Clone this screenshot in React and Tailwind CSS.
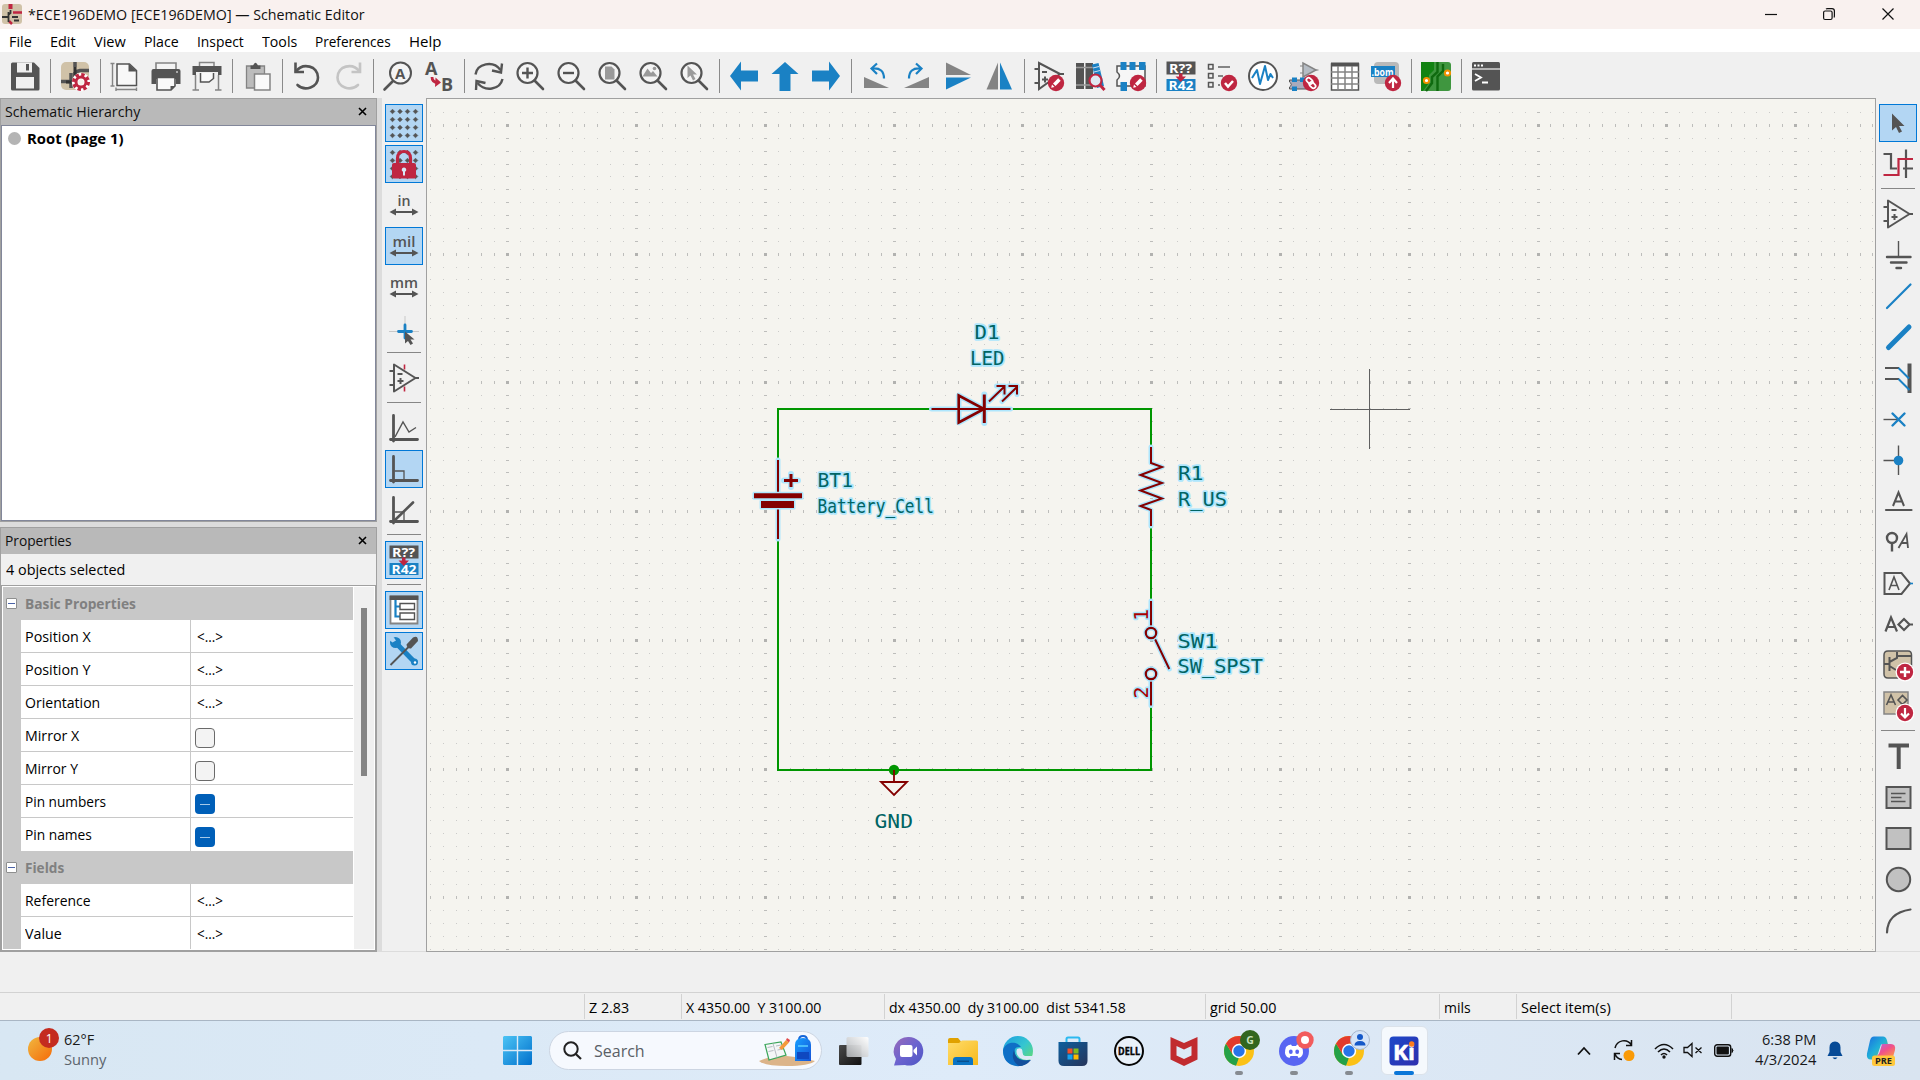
import React, { useLayoutEffect, useRef, useState } from "react";

const D = "#545454";
const B = "#1a81c4";
const R = "#bf2641";
const G = "#848484";

/* Text squeezed or stretched horizontally to an exact width. */
function Fit({ w, children, className = "" }) {
  const ref = useRef(null);
  const [k, setK] = useState(1);
  useLayoutEffect(() => {
    const n = ref.current.offsetWidth;
    if (n) setK(w / n);
  }, [w]);
  return (
    <div className={"shrink-0 whitespace-pre " + className} style={{ width: w }}>
      <span ref={ref} className="inline-block origin-left" style={{ transform: `scaleX(${k})` }}>
        {children}
      </span>
    </div>
  );
}

function Svg({ children, className = "size-[30px]", vb = "0 0 30 30" }) {
  return (
    <svg viewBox={vb} className={"block shrink-0 overflow-visible " + className} fill="none">
      {children}
    </svg>
  );
}

const Lens = ({ children }) => (
  <Svg>
    <circle cx="12.5" cy="12" r="10" stroke={D} strokeWidth="2.2" fill="#f4f4f4" />
    <path d="M19.5 19.5L28 28" stroke={D} strokeWidth="2.6" strokeLinecap="round" />
    {children}
  </Svg>
);

const Badge = ({ x = 22, y = 22, children }) => (
  <g transform={`translate(${x} ${y})`}>
    <circle r="8.2" fill={R} />
    {children}
  </g>
);

const Pencil = () => (
  <g>
    <path d="M-4.800 4.800l0.800-3.300 2.500 2.500z" fill="#fff" />
    <path d="M-3 0.500l5.200-5.200 2.500 2.500-5.200 5.200z" fill="#fff" />
  </g>
);

const Annotate = () => (
  <Svg>
    <rect x="0.5" y="0.5" width="29" height="13" fill={D} />
    <rect x="0.5" y="18" width="29" height="12" fill={B} />
    <text x="3" y="12" fontSize="13" fontWeight="700" fill="#fff" textLength="23" lengthAdjust="spacingAndGlyphs">R??</text>
    <text x="2.5" y="29" fontSize="13" fontWeight="700" fill="#fff" textLength="25" lengthAdjust="spacingAndGlyphs">R42</text>
    <path d="M13 12.5h3.500v3h3.500L14.800 21L9.500 15.500H13z" fill={R} />
  </Svg>
);

const OpAmp = ({ children, sw = 2 }) => (
  <Svg>
    {children}
    <path d="M5 1.500V28.500L26.500 15z" stroke={D} strokeWidth={sw} strokeLinejoin="round" />
    <path d="M0.500 8H5M0.500 22H5M26 15H30M8.500 11H13.500M8.500 18H14.500M11.500 15V21" stroke={D} strokeWidth={sw} />
  </Svg>
);

const GridDots = () => (
  <g fill={D}>
    {[3.5, 11, 18.5, 26.5].map((x) =>
      [3.5, 11.5, 19.5, 27.5].map((y) => (
        <path key={x + "-" + y} d={`M${x - 2.3} ${y}l2.300-2.300 2.300 2.300-2.300 2.300z`} stroke={D} strokeWidth="0.6" />
      ))
    )}
  </g>
);

const Units = ({ t, w }) => (
  <Svg>
    <text x={15 - w / 2} y="15.500" fontSize="15" fontWeight="600" fill={D} textLength={w} lengthAdjust="spacingAndGlyphs">{t}</text>
    <path d="M5 22H25" stroke={D} strokeWidth="2" />
    <path d="M0.500 22L7 18.500v7zM29.500 22L23 18.500v7z" fill={D} />
  </Svg>
);

const Axes = ({ children }) => (
  <Svg>
    <g transform="translate(0 1)">
      <path d="M4.500 1.500V27M1.500 25.500H28.500" stroke={D} strokeWidth="2.8" strokeLinecap="round" />
      {children}
    </g>
  </Svg>
);

const top = {
  save: (
    <Svg>
      <path d="M1 3q0-1.500 1.500-1.500H24l5.500 5.500V28q0 1.500-1.500 1.500H2.500Q1 29.500 1 28z" fill={D} />
      <path d="M7 1.500H22V11.500H7zM6 16H24V27.500H6z" fill="#f0f0f0" />
      <path d="M16 3h3v6.500h-3z" fill={D} />
    </Svg>
  ),
  setup: (
    <Svg>
      <rect x="1" y="1" width="28" height="28" rx="5" fill="#d0c2a8" />
      <path d="M15 1V6M15 11V19M1 20.500H11M11 12V27M15 11L20 9.500H29" stroke={D} strokeWidth="3.5" />
      <path d="M6 21h9M15 6v14" stroke="#333" strokeWidth="3" />
      <circle cx="21" cy="21" r="6" fill="#f4f0ea" stroke="#fff" strokeWidth="6.500" />
      <circle cx="21" cy="21" r="7" stroke={R} strokeWidth="4" strokeDasharray="3.200 2.300" />
      <circle cx="21" cy="21" r="5" stroke={R} strokeWidth="3" />
    </Svg>
  ),
  page: (
    <Svg>
      <path d="M7 3H19.500L26.500 9.500V24.500H7z" fill="#f8f8f8" stroke={D} strokeWidth="1.500" />
      <path d="M18.500 2.500V10.500H27z" fill={D} />
      <path d="M0.500 2.500H4.500M0.500 25H4.500M2.500 2.500V25M6 26.500v3.500M26.500 26.500v3.500M6 28.500H26.500" stroke={G} strokeWidth="1.400" />
    </Svg>
  ),
  print: (
    <Svg>
      <path d="M5 9V2H25V9" stroke={G} strokeWidth="1.600" fill="#f4f4f4" />
      <path d="M0.500 10q0-2 2-2H27.500q2 0 2 2V23H25V18H5V23H0.500z" fill={D} />
      <path d="M6 16.500H24V25l-4 4H6z" fill="#fafafa" stroke={D} strokeWidth="1.600" />
      <path d="M24 25h-4.500v4z" fill={D} />
      <path d="M25 11h2" stroke="#fff" />
    </Svg>
  ),
  plot: (
    <Svg>
      <path d="M7.500 6V1.500H22V6" stroke={G} strokeWidth="1.500" />
      <path d="M0.500 5H29.500V14H26V11H4V14H0.500z" fill={D} />
      <path d="M8.500 12V21H17l4.500-3.500V12" fill="#fafafa" stroke={D} strokeWidth="1.500" />
      <path d="M3.500 14V29M26.500 14V29M0.500 29H7M23 29H29.500" stroke={G} strokeWidth="1.500" />
    </Svg>
  ),
  paste: (
    <Svg>
      <path d="M4.500 5H22.500V27H4.500z" fill="#bcbcbc" stroke={G} strokeWidth="1.300" />
      <path d="M8.500 8V4.500H11Q13.500-1 16 4.500H18.500V8z" fill={D} />
      <path d="M12.500 13H28V29H12.500z" fill="#fafafa" stroke={G} strokeWidth="1.500" />
    </Svg>
  ),
  undo: (
    <Svg>
      <path d="M4 10.500C11 1 26 5 26 16.500C26 26 13 31 5.500 24" stroke={D} strokeWidth="2.600" strokeLinecap="round" />
      <path d="M3.500 1.500V11H12" stroke={D} strokeWidth="2.600" />
    </Svg>
  ),
  redo: (
    <Svg>
      <path d="M26.500 10.500C19.500 1 4.500 5 4.500 16.500C4.500 26 17.500 31 25 24" stroke="#c4c4c4" strokeWidth="2.600" strokeLinecap="round" />
      <path d="M27 1.500V11H18.500" stroke="#c4c4c4" strokeWidth="2.600" />
    </Svg>
  ),
  find: (
    <Svg>
      <circle cx="17.500" cy="12" r="10.500" stroke={D} strokeWidth="2" fill="#f4f4f4" />
      <path d="M9.500 20.500L1.500 28.500" stroke={D} strokeWidth="2.600" strokeLinecap="round" />
      <text x="12" y="17.500" fontSize="15" fontWeight="700" fill={D}>A</text>
    </Svg>
  ),
  replace: (
    <Svg>
      <text x="1" y="14" fontSize="18" fontWeight="700" fill={D}>A</text>
      <text x="17" y="29.500" fontSize="18" fontWeight="700" fill={D}>B</text>
      <path d="M8 16Q8 21.500 14 21.500" stroke={R} strokeWidth="2.800" />
      <path d="M11.500 16.500l5.500 5-6 4.500z" fill={R} />
    </Svg>
  ),
  refresh: (
    <Svg>
      <path d="M1.500 13.500C3 2.500 19-1 26.500 9M28.500 18C26 29 11 31 3.500 22" stroke={D} strokeWidth="2.400" />
      <path d="M28 2.500L27 11.500L18 9.500" stroke={D} strokeWidth="2.400" />
      <path d="M2 29L2.500 20L11.500 22" stroke={D} strokeWidth="2.400" />
    </Svg>
  ),
  zin: <Lens><path d="M12.500 6.500v11M7 12h11" stroke={D} strokeWidth="2.400" /></Lens>,
  zout: <Lens><path d="M7 12h11" stroke={D} strokeWidth="2.400" /></Lens>,
  zfit: <Lens><path d="M8 5.500h6.500l3 3V18.500H8z" fill="#9a9a9a" /></Lens>,
  zobj: <Lens><path d="M4.500 15.500l5-8 3.500 4.500 2-2 4.500 5.500z" fill="#9a9a9a" /><circle cx="16.500" cy="7.500" r="1.800" fill="#9a9a9a" /></Lens>,
  zsel: <Lens><path d="M8.500 4.500V17l3-2.500 2.500 5 2.500-1.500-2.500-4.500h4z" fill="#9a9a9a" /></Lens>,
  left: <Svg><path d="M1 15L12 0.500V9.500H29V20.500H12V29.500z" fill={B} /></Svg>,
  up: <Svg><path d="M15 1L28.500 13H20.500V30H9.500V13H1.500z" fill={B} /></Svg>,
  right: <Svg><path d="M29 15L18 0.500V9.500H1V20.500H18V29.500z" fill={B} /></Svg>,
  ccw: (
    <Svg>
      <path d="M3 16V27H28z" fill={G} />
      <path d="M11.500 7.500Q23 6.500 23 17.500M16 2.500L10.500 7.500L16 13" stroke={B} strokeWidth="2.200" />
    </Svg>
  ),
  cw: (
    <Svg>
      <path d="M27 16V27H2z" fill={G} />
      <path d="M18.500 7.500Q7 6.500 7 17.500M14 2.500L19.500 7.500L14 13" stroke={B} strokeWidth="2.200" />
    </Svg>
  ),
  mv: <Svg><path d="M3 1.500V14L28 14z" fill={G} /><path d="M3 16.500H28L3 28.500z" fill={B} /></Svg>,
  mh: <Svg><path d="M14 1.500V28.500H2.500z" fill={G} /><path d="M16 1.500V28.500H28z" fill={B} /></Svg>,
  symed: (
    <Svg>
      <path d="M5 2V28L26 13z" stroke={D} strokeWidth="2" />
      <path d="M0.500 8H5M0.500 22H5M8 11H13M8 18.500H14M11 15.500V21.500M24 13H30" stroke={D} strokeWidth="2" />
      <Badge><Pencil /></Badge>
    </Svg>
  ),
  browse: (
    <Svg>
      <path d="M1 2H9V28H1zM10.500 2H18V28H10.500z" fill={D} />
      <path d="M1 6.500H18M1 24H18" stroke="#999" strokeWidth="1.500" />
      <path d="M17 3.500L23.500 2L29 25L22 27z" fill={B} />
      <path d="M18 7l6-1.500M19 11l6-1.500" stroke="#cde" />
      <path d="M25 24L29.500 29" stroke={R} strokeWidth="3" />
      <circle cx="20.500" cy="19.500" r="6" fill="#dfe9f2" stroke={R} strokeWidth="2.200" />
    </Svg>
  ),
  fped: (
    <Svg>
      <path d="M1 5H29V25H1V19Q6 15 1 11z" fill="#f6f6f6" stroke={D} strokeWidth="1.500" />
      <path d="M4.500 1H10.500V9H4.500zM13.500 1H19.500V9H13.500zM23 1H29.500V9H23zM4.500 21H11V30H4.500z" fill={B} />
      <Badge><Pencil /></Badge>
    </Svg>
  ),
  ann: <Annotate />,
  erc: (
    <Svg>
      <path d="M1.500 3.500h4.500v4.500h-4.500zM1.500 12.500h4.500v4.500h-4.500zM1.500 21.500h4.500v4.500h-4.500z" stroke={D} strokeWidth="1.500" />
      <path d="M11 6H23M11 15H16M11 24H13" stroke={G} strokeWidth="2" />
      <Badge><path d="M-4 0l3 3.500 5-5.500" stroke="#fff" strokeWidth="2.500" /></Badge>
    </Svg>
  ),
  sim: (
    <Svg>
      <circle cx="15" cy="15" r="14" fill="#fff" stroke={D} strokeWidth="2" />
      <path d="M4 17L9 9L12 23L17 5L20 19L22.500 13L25 17" stroke={B} strokeWidth="2" strokeLinejoin="round" />
    </Svg>
  ),
  assign: (
    <Svg>
      <path d="M14 2V16L27 9z" fill="#b5bcc4" stroke={G} strokeWidth="1.500" />
      <path d="M11 5H14M11 12H14M27 9H29.500" stroke={G} />
      <path d="M0.500 19H20V28H0.500V26Q4 23.500 0.500 21z" fill="#aab" stroke={D} />
      <path d="M3 16.500H8V21H3zM11 16.500H16V21H11zM3 25.500H8V30H3z" fill={B} />
      <Badge>
        <rect x="-5.500" y="-2.200" width="7" height="4.400" rx="2.200" transform="rotate(45) translate(-0.600 -0.500)" stroke="#fff" strokeWidth="1.700" />
        <rect x="-1.500" y="-2.200" width="7" height="4.400" rx="2.200" transform="rotate(45) translate(0.600 0.500)" stroke="#fff" strokeWidth="1.700" />
      </Badge>
    </Svg>
  ),
  table: (
    <Svg>
      <path d="M1.500 3H28.500V29H1.500z" fill="#fff" stroke={D} strokeWidth="1.500" />
      <path d="M1 1.500H29V5.500H1z" fill={D} />
      <path d="M1 11H29M1 17H29M1 23H29M8 5V29M15 5V29M22 5V29" stroke={G} strokeWidth="1.500" />
    </Svg>
  ),
  bom: (
    <Svg>
      <rect x="3" y="1" width="25" height="22" rx="4" fill="#b9b9b9" />
      <rect x="0" y="5" width="24" height="11" fill={B} />
      <text x="0.500" y="14.500" fontSize="11" fontWeight="700" fill="#fff" textLength="22" lengthAdjust="spacingAndGlyphs">.bom</text>
      <Badge><path d="M0 5V-4M-4 0L0-4.500L4 0" stroke="#fff" strokeWidth="2.200" /></Badge>
    </Svg>
  ),
  pcb: (
    <Svg>
      <rect x="0" y="1" width="30" height="29" rx="3" fill="#3f963f" />
      <path d="M0 1H13V9L8 14V22L2 30H0zM0 3z" fill="#128312" />
      <path d="M16.500 1V11L11 16V22L5 30M22 3V10L16.500 15.500V30" stroke="#0f6a0f" strokeWidth="2.400" />
      <circle cx="26.500" cy="12" r="2.600" fill="#fff" stroke="#f29100" strokeWidth="2" />
      <circle cx="5.500" cy="19.500" r="2.600" fill="#fff" stroke="#f29100" strokeWidth="2" />
    </Svg>
  ),
  term: (
    <Svg>
      <rect x="1" y="1" width="28" height="28.500" rx="1.500" fill={D} />
      <path d="M1 8H29" stroke="#e8e8e8" strokeWidth="1.300" />
      <path d="M3 4.500h2M6.500 4.500h2M10 4.500h2" stroke="#fff" strokeWidth="2" />
      <path d="M4 13L10 16.500L4 20M11 21.500H17" stroke="#fff" strokeWidth="1.800" />
    </Svg>
  ),
};

const topOrder = [
  "save", "|", "setup", "|", "page", "print", "plot", "|", "paste", "|", "undo", "redo", "|", "find", "replace", "|",
  "refresh", "zin", "zout", "zfit", "zobj", "zsel", "|", "left", "up", "right", "|", "ccw", "cw", "mv", "mh", "|",
  "symed", "browse", "fped", "|", "ann", "erc", "sim", "assign", "table", "bom", "|", "pcb", "|", "term",
];

const leftTools = [
  { on: 1, i: <Svg><GridDots /></Svg> },
  {
    on: 1,
    i: (
      <Svg>
        <GridDots />
        <path d="M8.500 15V9.500Q8.500 2.500 15 2.500T21.500 9.500V15" stroke={R} strokeWidth="3.200" />
        <rect x="3" y="14" width="24" height="15.500" rx="2" fill={R} />
        <path d="M15 18.500a2.200 2.200 0 0 1 1 4.200V26.500h-2v-3.800a2.200 2.200 0 0 1 1-4.200z" fill="#d8e8f8" />
      </Svg>
    ),
  },
  { i: <Units t="in" w={13} /> },
  { on: 1, i: <Units t="mil" w={23} /> },
  { i: <Units t="mm" w={28} /> },
  {
    i: (
      <Svg>
        <g transform="translate(0 2)">
          <path d="M16 1V17M0 16.500H30" stroke="#c8c8c8" />
          <path d="M16 10V23M9.500 16.500H22.500" stroke={B} strokeWidth="2.800" strokeLinecap="round" />
          <path d="M16 16.500V28.500l3-2.500 2.500 4 2.500-1.500-2.500-4h4z" fill={D} />
        </g>
      </Svg>
    ),
  },
  "|",
  { i: <OpAmp><path d="M15.500 1.500V6.500M15.500 23.500V28.500" stroke={R} strokeWidth="1.600" /></OpAmp> },
  "|",
  { i: <Axes><path d="M6 23L14 8L20 18L27 13.500" stroke={D} strokeWidth="1.400" /></Axes> },
  { on: 1, i: <Axes><path d="M5.500 16H15V25" stroke={D} strokeWidth="1.300" /></Axes> },
  { i: <Axes><path d="M5.500 16H15V25" stroke={D} strokeWidth="1.300" /><path d="M5 25L24 6.500" stroke={D} strokeWidth="2.600" strokeLinecap="round" /></Axes> },
  "|",
  { on: 1, i: <Annotate /> },
  "|",
  {
    on: 1,
    i: (
      <Svg>
        <path d="M1.500 1.500H28.500V28.500H1.500z" fill="#fff" stroke={G} strokeWidth="1.800" />
        <path d="M0.600 0.600H29.400V5H0.600z" fill={D} />
        <path d="M6.500 5V21.500H11M6.500 11.500H11" stroke={B} strokeWidth="2.200" />
        <path d="M11 8.500H25.500V14.500H11zM11 18H25.500V24.500H11z" stroke={D} strokeWidth="1.400" />
      </Svg>
    ),
  },
  {
    on: 1,
    i: (
      <Svg>
        <path d="M6.500 6.500L24.500 25" stroke={B} strokeWidth="5" />
        <circle cx="6.500" cy="6.500" r="5.500" fill={B} />
        <path d="M-1-1H3L7 4.500 3.500 6.500-1 3z" fill="#b3d6f3" />
        <circle cx="25.500" cy="26" r="3.500" fill={B} />
        <circle cx="26" cy="26.500" r="1.200" fill="#fff" />
        <path d="M1.500 29L20 10.500" stroke={D} strokeWidth="1.800" />
        <path d="M17.500 8.500L24 1.500Q29-1 29 5L22 12.500Q18 13 17.500 8.500z" fill={D} />
      </Svg>
    ),
  },
];

const SheetBase = () => (
  <path d="M1 5Q1 1 5 1H25Q28.500 1 28.500 5V24Q28.500 28 25 28H5Q1 28 1 24z" fill="#d0c2a8" stroke={D} strokeWidth="1.500" />
);

const rightTools = [
  { on: 1, i: <Svg><path d="M9 5.500V22.500l4-3.500 3 6 3-1.500-3-5.500h5.500z" fill={D} /></Svg> },
  {
    i: (
      <Svg>
        <path d="M0.500 5H8V19.500H14M20 19.500H30M23 0.500V29" stroke={D} strokeWidth="2.200" />
        <path d="M0.500 26H15.500V10H30" stroke={R} strokeWidth="2.200" />
      </Svg>
    ),
  },
  "|",
  { i: <OpAmp /> },
  { i: <Svg><path d="M15.500 1V16" stroke={D} strokeWidth="1.400" /><path d="M4 17H27.500M8 22.500H23.500M13.500 28H18" stroke={D} strokeWidth="2.400" strokeLinecap="round" /></Svg> },
  { i: <Svg><path d="M4 27L27.500 3.500" stroke={B} strokeWidth="2.200" strokeLinecap="round" /></Svg> },
  { i: <Svg><path d="M5.500 25.500L26 5" stroke={B} strokeWidth="5" strokeLinecap="round" /></Svg> },
  {
    i: (
      <Svg>
        <path d="M26.500 0.500V30" stroke={D} strokeWidth="4" />
        <path d="M2 5H16M2 16H16" stroke={D} strokeWidth="2.200" />
        <path d="M15.500 5L26 15.500M15.500 16L26.500 27" stroke={B} strokeWidth="2" />
      </Svg>
    ),
  },
  { i: <Svg><path d="M0.500 15.500H15" stroke={D} strokeWidth="1.400" /><path d="M9.500 9.500L21.500 21.500M21.500 9.500L9.500 21.500" stroke={B} strokeWidth="2.400" strokeLinecap="round" /></Svg> },
  { i: <Svg><path d="M0.500 15.500H15M15.500 0.500V30" stroke={D} strokeWidth="1.400" /><circle cx="15.500" cy="15.500" r="4.800" fill={B} /></Svg> },
  { i: <Svg><path d="M10 20L15.500 6.500L21 20M12 15.500H19" stroke={D} strokeWidth="2" /><path d="M3 24H28.500" stroke={D} strokeWidth="2.200" strokeLinecap="round" /></Svg> },
  {
    i: (
      <Svg>
        <circle cx="9" cy="11" r="5" stroke={D} strokeWidth="2.400" />
        <path d="M9 16V24.500" stroke={D} strokeWidth="2.400" />
        <path d="M15.500 21L23.500 7L25 21M18.500 16H24.500" stroke={D} strokeWidth="1.800" />
      </Svg>
    ),
  },
  {
    i: (
      <Svg>
        <path d="M1.500 5H18.500L27 15.500L18.500 26H1.500z" stroke={D} strokeWidth="2" />
        <path d="M6 22L11 9L16 22M8 17.500H14" stroke={D} strokeWidth="1.600" />
        <path d="M27 15.500H30" stroke={B} strokeWidth="1.600" />
      </Svg>
    ),
  },
  {
    i: (
      <Svg>
        <path d="M2.500 22.500L8 8.500L14 22.500M4.500 18H12" stroke={D} strokeWidth="2.200" />
        <path d="M15.500 15.500L21 10L26.500 15.500L21 21zM26.500 15.500H30" stroke={D} strokeWidth="2.200" />
      </Svg>
    ),
  },
  {
    i: (
      <Svg>
        <SheetBase />
        <path d="M1 14H6M6.500 7V21M6.500 12L14 8V2M14 6H28M6.500 16L13 20" stroke={D} strokeWidth="2" />
        <circle cx="22" cy="22" r="9.500" fill="#fff" />
        <Badge><path d="M-5 0H5M0-5V5" stroke="#fff" strokeWidth="2.400" /></Badge>
      </Svg>
    ),
  },
  {
    i: (
      <Svg>
        <path d="M1 1H25V23H1z" fill="#d0c2a8" stroke={G} strokeWidth="1.500" />
        <path d="M3.500 14L8 4L12.500 14M5 11H11M15 9L19.500 4.500L24 9L19.500 13.500z" stroke={D} strokeWidth="1.600" />
        <circle cx="22" cy="22" r="9.500" fill="#fff" />
        <Badge><path d="M0-5V4M-4 0.500L0 4.500L4 0.500" stroke="#fff" strokeWidth="2.200" /></Badge>
      </Svg>
    ),
  },
  "|",
  { i: <Svg><path d="M5.500 4.500H26M15.700 4.500V28" stroke={D} strokeWidth="4" /></Svg> },
  { i: <Svg><path d="M3.500 5H27.500V26H3.500z" fill="#c1c1c1" stroke={D} strokeWidth="2" /><path d="M8 11.500H22.500M8 15.500H18.500M8 19.500H22.500" stroke={D} strokeWidth="1.500" /></Svg> },
  { i: <Svg><path d="M3.500 5H27.500V26H3.500z" fill="#c1c1c1" stroke={D} strokeWidth="2" /></Svg> },
  { i: <Svg><circle cx="15.500" cy="15.500" r="11.700" fill="#c1c1c1" stroke={D} strokeWidth="2" /></Svg> },
  { i: <Svg><path d="M4 27.500Q4.500 8 27.500 4.500" stroke={D} strokeWidth="2.200" strokeLinecap="round" /></Svg> },
];

function ToolColumn({ items, className }) {
  return (
    <div className={"flex flex-col items-center bg-[#f0f0f0] pt-[4px] " + className}>
      {items.map((t, n) =>
        t === "|" ? (
          <div key={n} className="flex h-[9px] w-[34px] shrink-0 items-start pt-[4px]">
            <div className="h-px w-full bg-[#868686]" />
          </div>
        ) : (
          <div key={n} className="flex h-[41px] shrink-0 items-center">
            <div className={"flex size-[38px] items-center justify-center border " + (t.on ? "border-[#0078d7] bg-[#b3d6f3]" : "border-transparent")}>
              {t.i}
            </div>
          </div>
        )
      )}
    </div>
  );
}

/* ---------- schematic canvas ---------- */
const STEP_X = 12.88;
const STEP_Y = 12.87;
let minor = "";
let dashV = "";
let dashH = "";
let major = "";
for (let i = -6; i < 107; i++) {
  for (let j = -2; j < 65; j++) {
    const x = Math.round(507.1 + i * STEP_X);
    const y = Math.round(125 + j * STEP_Y);
    if (x < 428 || x > 1873 || y < 100 || y > 949) continue;
    const mi = i % 10 === 0;
    const mj = j % 10 === 0;
    if (mi && mj) major += `M${x - 1} ${y - 1}h3v3h-3z`;
    else if (mj) dashV += `M${x} ${y - 1}h1v3h-1z`;
    else if (mi) dashH += `M${x - 1} ${y}h3v1h-3z`;
    else minor += `M${x} ${y}h1v1h-1z`;
  }
}

const HALO = "#aee6fd";
const MAROON = "#840000";

function Label({ x, y, w, children, halo = true, fill = "#006464" }) {
  return (
    <text
      x={x}
      y={y}
      textLength={w}
      lengthAdjust="spacingAndGlyphs"
      fontSize="20"
      fill={fill}
      stroke={halo ? HALO : "none"}
      strokeWidth={halo ? 3.4 : 0}
      strokeLinejoin="round"
      paintOrder="stroke"
      fontFamily="'DejaVu Sans Mono', monospace"
    >
      {children}
    </text>
  );
}

/* Strokes that share one selection glow; each entry is [path, width]. */
function Glow({ lines }) {
  return (
    <>
      {lines.map(([d, sw]) => (
        <path key={d} d={d} stroke={HALO} strokeWidth={sw + 3} strokeLinecap="round" strokeLinejoin="round" />
      ))}
      {lines.map(([d, sw]) => (
        <path key={d + "c"} d={d} stroke={MAROON} strokeWidth={sw} />
      ))}
    </>
  );
}

function Canvas() {
  return (
    <div className="h-[854px] w-[1450px] shrink-0 overflow-hidden border border-[#a0a0a0] bg-[#f5f4ef]">
      <svg viewBox="427 99 1448 852" className="block h-[852px] w-[1448px]" fill="none">
        <g shapeRendering="crispEdges">
          <path d={minor} fill="#cbcbc9" />
          <path d={dashV + dashH} fill="#bdbdbb" />
          <path d={major} fill="#b2b2b0" />
        </g>
        <path d="M931 409H778V460M778 539V770H1151V705M1151 601V526M1151 447V409H1010" stroke="#009600" strokeWidth="2" />
        <circle cx="894" cy="770" r="5.200" fill="#009600" />

        <Glow
          lines={[
            ["M931.500 409H1010.500", 2],
            ["M958.700 395.500V422.500L984 409z", 2.6],
            ["M984.300 394.500V423", 3],
            ["M989 401.500L1004.500 386.500M996.500 386H1004.500V394.500", 2],
            ["M1002 401.500L1017.500 386.500M1008.500 386H1017V394.500", 2],
          ]}
        />

        <Glow lines={[["M778 460V493M778 508V539", 2], ["M784 480.500H798M791 474V487", 3]]} />
        <path d="M754 493.300H802V498.200H754zM761 501H794V508H761z" fill={MAROON} stroke={HALO} strokeWidth="3" paintOrder="stroke" strokeLinejoin="round" />

        <Glow lines={[["M1151 447V463L1162 467L1140.500 475L1162 483L1140.500 490.500L1162 498.500L1140.500 506L1151 510V526", 2]]} />

        <Glow lines={[["M1151 601V628M1151 679V705.500M1154.500 638L1169.300 669", 2]]} />
        <circle cx="1151" cy="633" r="5.200" stroke={HALO} strokeWidth="5" />
        <circle cx="1151" cy="674" r="5.200" stroke={HALO} strokeWidth="5" />
        <circle cx="1151" cy="633" r="5.200" stroke={MAROON} strokeWidth="2.200" />
        <circle cx="1151" cy="674" r="5.200" stroke={MAROON} strokeWidth="2.200" />
        <g transform="translate(1147.500 621) rotate(-90)"><Label x="0" y="0" w={12} fill="#a90000">1</Label></g>
        <g transform="translate(1147.500 698.500) rotate(-90)"><Label x="0" y="0" w={12} fill="#a90000">2</Label></g>

        <path d="M894 770V782M881 782H907L894 795z" stroke={MAROON} strokeWidth="1.800" />

        <Label x={974.500} y={338.500} w={25}>D1</Label>
        <Label x={970} y={364.500} w={34.500}>LED</Label>
        <Label x={817.500} y={487} w={35.500}>BT1</Label>
        <Label x={817.500} y={513} w={116.500}>Battery_Cell</Label>
        <Label x={1178} y={480} w={25.500}>R1</Label>
        <Label x={1178} y={505.700} w={49}>R_US</Label>
        <Label x={1177.500} y={647.500} w={40}>SW1</Label>
        <Label x={1177.500} y={673} w={85.500}>SW_SPST</Label>
        <Label x={874.500} y={827.500} w={38.500} halo={false}>GND</Label>

        <path d="M1330 409.500H1410M1369.500 369V449" stroke="#606060" shapeRendering="crispEdges" />
      </svg>
    </div>
  );
}

/* ---------- left dock ---------- */
const CloseX = () => (
  <Svg className="size-[9px]" vb="0 0 9 9"><path d="M1 1L8 8M8 1L1 8" stroke="#000" strokeWidth="1.600" /></Svg>
);

function Group({ title, w, children }) {
  return (
    <div className="w-[350px] bg-[#c8c8c8]">
      <div className="flex h-[33px] items-center pl-[3px]">
        <div className="flex size-[11px] items-center justify-center rounded-[1px] border border-[#8e8f8f] bg-white">
          <div className="h-px w-[7px] bg-[#4b63a7]" />
        </div>
        <Fit w={w} className="ml-[8px] text-[15px] font-bold leading-[33px] text-[#808080]">{title}</Fit>
      </div>
      <div className="ml-[18px] flex flex-col">{children}</div>
    </div>
  );
}

function Row({ name, w, kind, last }) {
  return (
    <div className={"flex h-[33px] border-[#c8c8c8] bg-white " + (last ? "" : "border-b")}>
      <div className="w-[170px] border-r border-[#c8c8c8] pl-[4px]">
        <Fit w={w} className="text-[15px] leading-[33px]">{name}</Fit>
      </div>
      {kind === "dots" && <Fit w={26} className="ml-[6px] text-[14px] leading-[34px]">{"<...>"}</Fit>}
      {kind === "off" && <div className="ml-[4px] mt-[9px] size-[20px] rounded-[4px] border border-[#6a6a6a] bg-[#f3f3f3]" />}
      {kind === "mixed" && (
        <div className="ml-[4px] mt-[9px] flex size-[20px] items-center justify-center rounded-[4px] bg-[#005fb8]">
          <div className="h-px w-[10px] bg-[#a5c8e8]" />
        </div>
      )}
    </div>
  );
}

function LeftDock() {
  return (
    <div className="flex h-[854px] w-[377px] shrink-0 flex-col justify-between bg-[#dcdcdc]">
      <div className="flex h-[424px] flex-col border border-[#a0a0a0] bg-white">
        <div className="flex h-[26px] shrink-0 items-center justify-between bg-[#b9b9b9] pb-[2px] pl-[4px] pr-[9px]">
          <Fit w={135} className="text-[15px] text-[#101010]">Schematic Hierarchy</Fit>
          <CloseX />
        </div>
        <div className="flex-1 border border-[#82879a] pl-[6px] pt-[2px]">
          <div className="flex h-[20px] items-center">
            <div className="size-[13px] rounded-full bg-[#b4b4b4]" />
            <Fit w={96} className="ml-[6px] text-[15px] font-bold leading-[20px]">Root (page 1)</Fit>
          </div>
        </div>
      </div>
      <div className="flex h-[425px] flex-col border border-[#a0a0a0] bg-[#f0f0f0]">
        <div className="flex h-[26px] shrink-0 items-center justify-between bg-[#b9b9b9] pb-[2px] pl-[4px] pr-[9px]">
          <Fit w={67} className="text-[15px] text-[#101010]">Properties</Fit>
          <CloseX />
        </div>
        <Fit w={119} className="ml-[5px] h-[31px] text-[15px] leading-[30px]">4 objects selected</Fit>
        <div className="flex min-h-0 flex-1 overflow-hidden border border-[#a0a0a0] bg-white pl-px pt-px pb-px">
          <div className="w-[350px] overflow-hidden">
            <Group title="Basic Properties" w={111}>
              <Row name="Position X" w={66} kind="dots" />
              <Row name="Position Y" w={66} kind="dots" />
              <Row name="Orientation" w={75} kind="dots" />
              <Row name="Mirror X" w={54} kind="off" />
              <Row name="Mirror Y" w={53} kind="off" />
              <Row name="Pin numbers" w={81} kind="mixed" />
              <Row name="Pin names" w={67} kind="mixed" last />
            </Group>
            <Group title="Fields" w={39}>
              <Row name="Reference" w={66} kind="dots" />
              <Row name="Value" w={37} kind="dots" last />
            </Group>
          </div>
          <div className="ml-px mr-px flex-1 bg-[#f0f0f0]">
            <div className="ml-[7px] mt-[21px] h-[168px] w-[6px] bg-[#858585]" />
          </div>
        </div>
      </div>
    </div>
  );
}

/* ---------- status bar ---------- */
const status = [
  ["w-[97px]", 40, "Z 2.83"],
  ["w-[203px]", 135, "X 4350.00  Y 3100.00"],
  ["w-[321px]", 237, "dx 4350.00  dy 3100.00  dist 5341.58"],
  ["w-[234px]", 66, "grid 50.00"],
  ["w-[77px]", 27, "mils"],
  ["w-[215px]", 90, "Select item(s)"],
];

/* ---------- taskbar ---------- */
const Chrome = () => (
  <>
    <circle cx="15" cy="15" r="15" fill="#fbc116" />
    <path d="M2 7.500L9 19L15 21.500L12 29.700A15 15 0 0 1 2 7.500z" fill="#24a148" />
    <path d="M15 7.500H28Q24 0 15 0Q6 0 2 7.500L8.500 18Z" fill="#e33b2e" />
    <circle cx="15" cy="15" r="7.200" fill="#fff" />
    <circle cx="15" cy="15" r="5.700" fill="#2874e8" />
  </>
);

const apps = [
  {
    i: (
      <Svg>
        <rect x="1" y="9" width="22.500" height="20" rx="1" fill="url(#gDark)" />
        <rect x="8.500" y="1" width="22" height="20" rx="1.500" fill="url(#gGlass)" />
      </Svg>
    ),
  },
  {
    i: (
      <Svg>
        <path d="M15 1A14.300 14.300 0 1 1 12 29L1 29.500L3 23A14.300 14.300 0 0 1 15 1z" fill="url(#gChat)" />
        <rect x="7" y="9" width="12.500" height="12" rx="2" fill="#fff" />
        <path d="M20.500 14l3.500-3.500v9L20.500 16z" fill="#fff" />
      </Svg>
    ),
  },
  {
    i: (
      <Svg>
        <path d="M0 4Q0 2 2 2H10L13 5.500V12H0z" fill="#e0a100" />
        <path d="M0 7H11L14 4.500H28.500Q30 4.500 30 6V29H0z" fill="url(#gFold)" />
        <path d="M5 29V24Q5 21 8 21H22Q25 21 25 24V29z" fill="#0a74c4" />
        <path d="M9 25.300H21" stroke="#07508e" strokeWidth="1.500" />
      </Svg>
    ),
  },
  {
    i: (
      <Svg>
        <circle cx="15" cy="15" r="15" fill="url(#gEdge)" />
        <path d="M0 14C2 6 13 4 18 11Q10 10 12 18Q15 26 27 24Q21 31 13 30Q0 28 0 14z" fill="#0f6fc6" />
        <path d="M11 14Q7 24 16 30Q23 30 28 24Q15 26 12 18z" fill="#134f9c" />
        <path d="M19.500 15Q19 19 22 20H30V22Q24 26 17 22Q12 18 14 13Q19 11 19.500 15z" fill="#dde9f7" />
      </Svg>
    ),
  },
  {
    i: (
      <Svg>
        <path d="M8.500 7V3Q8.500 1.500 10 1.500H20Q21.500 1.500 21.500 3V7" stroke="#2cb9f0" strokeWidth="2" />
        <path d="M0.500 6H29.500V25Q29.500 30 24 30H6Q0.500 30 0.500 25z" fill="url(#gStore)" />
        <path d="M9.500 12.500h5v5h-5z" fill="#f2502a" />
        <path d="M15.500 12.500h5v5h-5z" fill="#7fba20" />
        <path d="M9.500 18.500h5v5h-5z" fill="#15a2f0" />
        <path d="M15.500 18.500h5v5h-5z" fill="#ffb900" />
      </Svg>
    ),
  },
  {
    i: (
      <Svg>
        <circle cx="15" cy="15" r="14" stroke="#050505" strokeWidth="2" fill="#e9f1fa" />
        <text x="4" y="18.800" fontSize="10.500" fontWeight="700" fill="#050505" stroke="#050505" strokeWidth="0.400" textLength="22" lengthAdjust="spacingAndGlyphs">DELL</text>
      </Svg>
    ),
  },
  { i: <Svg><path d="M1.500 1L15 7L28.500 1V23.500L15 30L1.500 23.500zM7.500 10V19.500L15 23L22.500 19.500V10L15 13.500z" fill="#c12b2f" fillRule="evenodd" /></Svg> },
  {
    dot: 1,
    i: (
      <Svg>
        <Chrome />
        <circle cx="26" cy="4" r="10" fill="#32661f" />
        <text x="22.300" y="7.800" fontSize="10.500" fontWeight="700" fill="#c8e0bc">G</text>
      </Svg>
    ),
  },
  {
    dot: 1,
    i: (
      <Svg>
        <circle cx="15" cy="15" r="15" fill="#5865f2" />
        <path d="M8 21Q4.500 18 7 11Q9 8.500 12 8.500L13 10H17L18 8.500Q21 8.500 23 11Q25.500 18 22 21L19.500 22L18.500 20H11.500L10.500 22z" fill="#fff" />
        <ellipse cx="11.800" cy="15.800" rx="1.900" ry="2.200" fill="#5865f2" />
        <ellipse cx="18.200" cy="15.800" rx="1.900" ry="2.200" fill="#5865f2" />
        <circle cx="26" cy="4" r="8.700" fill="#f25c5c" />
        <circle cx="26" cy="4" r="4" fill="#fff" />
      </Svg>
    ),
  },
  {
    dot: 1,
    i: (
      <Svg>
        <Chrome />
        <circle cx="26" cy="4" r="9.500" fill="#d5e4f8" stroke="#a7b6cc" />
        <circle cx="26" cy="1" r="3" fill="#1558c8" />
        <path d="M20.500 9.500Q20.500 5 26 5T31.500 9.500z" fill="#1558c8" />
      </Svg>
    ),
  },
  {
    active: 1,
    i: (
      <Svg>
        <rect x="0.500" y="0.500" width="29" height="29" rx="4" fill="url(#gKi)" />
        <text x="4" y="23.500" fontSize="22" fontWeight="700" fill="#fff" stroke="#fff" strokeWidth="0.600" textLength="22" lengthAdjust="spacingAndGlyphs">Ki</text>
        <circle cx="22.700" cy="8" r="2.700" fill="#ff7b1c" />
      </Svg>
    ),
  },
];

const Grad = ({ id, a, b, m }) => (
  <linearGradient id={id} x1="0" y1="0" x2="1" y2="1">
    <stop offset="0" stopColor={a} />
    {m && <stop offset="0.500" stopColor={m} />}
    <stop offset="1" stopColor={b} />
  </linearGradient>
);

function Taskbar() {
  return (
    <div className="flex h-[60px] shrink-0 items-center border-t border-[#a9b6c4] bg-linear-to-r from-[#d8e7f3] via-[#deebf9] to-[#d9e4f0]">
      <svg className="absolute size-0">
        <defs>
          <Grad id="gDark" a="#4a4a4a" b="#111" />
          <linearGradient id="gGlass" x1="1" y1="0" x2="0" y2="1">
            <stop offset="0" stopColor="#fff" />
            <stop offset="1" stopColor="#b0b3b6" stopOpacity="0.900" />
          </linearGradient>
          <Grad id="gChat" a="#9a6ab8" m="#6b63cf" b="#4d55c4" />
          <Grad id="gFold" a="#ffdc6b" b="#f7b91a" />
          <Grad id="gEdge" a="#1b9de2" m="#35c6d0" b="#6fe05a" />
          <Grad id="gStore" a="#0d5f9e" b="#27345a" />
          <Grad id="gKi" a="#1d48c8" b="#2e2fae" />
          <Grad id="gWin" a="#4cc4f5" b="#0070cc" />
          <Grad id="gSun" a="#f0b840" b="#f56a08" />
          <Grad id="gBag" a="#17a0ff" b="#1553d8" />
          <Grad id="gCoA" a="#1a6de0" m="#20b0d8" b="#8bc34a" />
          <Grad id="gCoB" a="#a56be8" m="#f0508c" b="#ff9d3c" />
        </defs>
      </svg>
      <Svg className="mb-[11px] ml-[28px] h-[34px] w-[32px]" vb="0 0 32 34">
        <circle cx="12" cy="21" r="12" fill="url(#gSun)" />
        <circle cx="21" cy="10" r="10" fill="#c42b1f" />
        <text x="17.800" y="14.500" fontSize="12" fill="#fff">1</text>
      </Svg>
      <div className="mb-[2px] ml-[4px] w-[439px]">
        <Fit w={30} className="text-[14px] leading-[20px] text-[#1a1a1a]">62°F</Fit>
        <Fit w={42} className="text-[14px] leading-[20px] text-[#5c646c]">Sunny</Fit>
      </div>
      <Svg className="size-[29px]" vb="0 0 29 29">
        <path d="M1 0H13.800V13.800H0V1zM15.200 0H28L29 1V13.800H15.200zM0 15.200H13.800V29H1L0 28zM15.200 15.200H29V28L28 29H15.200z" fill="url(#gWin)" />
      </Svg>
      <div className="ml-[17px] flex h-[39px] w-[273px] items-center rounded-full border border-[#ccd5e2] bg-[#f6f9fe] pl-[13px]">
        <Svg className="size-[19px]" vb="0 0 19 19">
          <circle cx="8" cy="8" r="6.700" stroke="#222" strokeWidth="2" />
          <path d="M12.800 13L18 18" stroke="#222" strokeWidth="2.200" />
        </Svg>
        <Fit w={51} className="ml-[12px] text-[16px] text-[#5a5f66]">Search</Fit>
        <Svg className="ml-[114px] h-[31px] w-[56px]" vb="0 0 56 31">
          <path d="M0 26Q14 20 28 21T56 26Q50 31 28 31T0 26z" fill="#dcb489" />
          <path d="M6 9.500L22 7L27 20L10 25z" fill="#f4f6f8" stroke="#3aa55a" strokeWidth="1.200" />
          <path d="M14 8.500L18 22.500M8.500 12.500l5-1M9.500 16.500l5-1M17 11l5-1M18.500 15l5-1" stroke="#b8bcc4" />
          <path d="M20 13L27 5L30 7.500L23 15z" fill="#f59a3c" />
          <path d="M27 5l1-2 3 2-1 2.500z" fill="#e24a4a" />
          <path d="M40 5Q40 1 44 1T48 5" stroke="#1565d8" strokeWidth="2" />
          <path d="M36 26V10Q36 3 44 3T52 10V26z" fill="url(#gBag)" />
          <path d="M38 17H50V24H38z" fill="#0f48c0" />
          <path d="M39 11H49" stroke="#5cd0ff" strokeWidth="1.500" />
        </Svg>
      </div>
      <div className="ml-[3px] flex">
        {apps.map((a, n) => (
          <div key={n} className="flex h-[59px] w-[55.200px] items-center justify-center">
            <div className={"relative flex h-[49px] w-[47px] items-center justify-center rounded-[6px] " + (a.active ? "border border-[#dbe2ea] bg-[#f5f9fd]" : "")}>
              {a.i}
              {a.dot && <div className="absolute bottom-0 h-[4px] w-[8px] rounded-full bg-[#868b91]" />}
              {a.active && <div className="absolute bottom-[-1px] h-[4px] w-[20px] rounded-full bg-[#0a76d8]" />}
            </div>
          </div>
        ))}
      </div>
      <div className="flex-1" />
      <Svg className="h-[10px] w-[14px]" vb="0 0 14 10"><path d="M1 8.500L7 2L13 8.500" stroke="#111" strokeWidth="1.800" /></Svg>
      <Svg className="ml-[22px] size-[22px]" vb="0 0 22 22">
        <path d="M2 8C4 0 14-2 18.500 5M18.500 0V5.500H13M1.500 20V13.500H7M2 14Q4 19 9 19.500" stroke="#111" strokeWidth="1.500" />
        <circle cx="16" cy="15.500" r="5.500" fill="#f99a07" />
      </Svg>
      <Svg className="ml-[19px] h-[16px] w-[20px]" vb="0 0 20 16">
        <path d="M1 6Q10-3 19 6M4 9Q10 3 16 9M7 12Q10 9 13 12" stroke="#111" strokeWidth="1.600" />
        <circle cx="10" cy="14" r="1.700" fill="#111" />
      </Svg>
      <Svg className="mb-[2px] ml-[9px] h-[16px] w-[20px]" vb="0 0 20 16">
        <path d="M1 5.500H4.500L9 1.500V14.500L4.500 10.500H1zM12.500 5.500L18.500 11M18.500 5.500L12.500 11" stroke="#111" strokeWidth="1.300" />
      </Svg>
      <Svg className="mb-px ml-[11px] h-[13px] w-[20px]" vb="0 0 20 13">
        <rect x="0.700" y="0.700" width="16" height="11.600" rx="2.500" stroke="#111" strokeWidth="1.400" />
        <rect x="2.500" y="2.500" width="12.400" height="8" rx="1" fill="#111" />
        <path d="M18 4.500Q20 6.500 18 8.500z" fill="#111" stroke="#111" />
      </Svg>
      <div className="mb-[2px] ml-[20px] flex w-[62px] flex-col items-end text-[#16181a]">
        <Fit w={54} className="text-[14px] leading-[20px]">6:38 PM</Fit>
        <Fit w={61} className="text-[14px] leading-[20px]">4/3/2024</Fit>
      </div>
      <Svg className="ml-[11px] h-[19px] w-[16px]" vb="0 0 16 19">
        <path d="M8 0.500Q13.500 1 13.500 6.500V11L15.500 15H0.500L2.500 11V6.500Q2.500 1 8 0.500z" fill="#064a96" />
        <path d="M5.500 16.500Q8 20 10.500 16.500z" fill="#064a96" />
      </Svg>
      <Svg className="ml-[23px] mr-[24px] size-[30px]">
        <path d="M8 0.500H17Q20 0.500 21 4.500L22 8.500H15L10 23.500H5Q0 23.500 1 17.500L4 4.500Q5 0.500 8 0.500z" fill="url(#gCoA)" />
        <path d="M16 8H25Q30 8 29 14L27 21H8Q13 20 14 15z" fill="url(#gCoB)" />
        <rect x="6" y="19.500" width="23" height="10.500" rx="2.500" fill="#ffc83d" />
        <text x="9" y="28.300" fontSize="9.500" fontWeight="700" fill="#222" textLength="17" lengthAdjust="spacingAndGlyphs">PRE</text>
      </Svg>
    </div>
  );
}

const menus = [
  ["File", 23, "ml-[9px]"],
  ["Edit", 26, "ml-[18px]"],
  ["View", 32, "ml-[18px]"],
  ["Place", 35, "ml-[18px]"],
  ["Inspect", 47, "ml-[18px]"],
  ["Tools", 35, "ml-[18px]"],
  ["Preferences", 76, "ml-[18px]"],
  ["Help", 32, "ml-[18px]"],
];

export default function App() {
  return (
    <div className="flex h-[1080px] w-[1920px] flex-col overflow-hidden bg-[#f0f0f0] font-['Open_Sans','Noto_Sans',sans-serif] text-black">
      <div className="flex h-[29px] shrink-0 items-center bg-[#f9f1ef] pb-px">
        <Svg className="ml-[2px] size-[20px]" vb="0 0 20 20">
          <rect width="20" height="20" rx="3" fill="#d0c2a8" />
          <path d="M8.500 0V5" stroke={R} strokeWidth="4" />
          <path d="M11 8.500H20M7 17l3 3" stroke={R} strokeWidth="2.500" />
          <path d="M0 13H6M6.500 8V18M8.500 6V9L6 11M10 13H16M12 16.500H17" stroke="#333" strokeWidth="1.800" />
        </Svg>
        <Fit w={337} className="ml-[6px] text-[15px] text-[#111]">*ECE196DEMO [ECE196DEMO] — Schematic Editor</Fit>
        <div className="flex-1" />
        <Svg className="mr-[46px] size-[12px]" vb="0 0 12 12"><path d="M0 6.500H12" stroke="#111" strokeWidth="1.200" /></Svg>
        <Svg className="mr-[47px] size-[12px]" vb="0 0 12 12">
          <rect x="0.600" y="3" width="8.500" height="8.500" rx="1.500" stroke="#111" strokeWidth="1.200" />
          <path d="M3 1Q3.500 0.600 4.500 0.600H9Q11.400 0.600 11.400 3V7.500Q11.400 9 11 9.500" stroke="#111" strokeWidth="1.200" />
        </Svg>
        <Svg className="mr-[26px] size-[12px]" vb="0 0 12 12"><path d="M0.500 0.500L11.500 11.500M11.500 0.500L0.500 11.500" stroke="#111" strokeWidth="1.200" /></Svg>
      </div>
      <div className="flex h-[23px] shrink-0 items-center bg-white pt-[2px]">
        {menus.map(([t, w, m]) => (
          <Fit key={t} w={w} className={"text-[15px] leading-[21px] " + m}>{t}</Fit>
        ))}
      </div>
      <div className="flex h-[46px] shrink-0 items-center pl-[4.500px] pt-[2px]">
        {topOrder.map((k, n) =>
          k === "|" ? (
            <div key={n} className="flex h-[34px] w-[9px] shrink-0 justify-center"><div className="h-full w-px bg-[#8a8a8a]" /></div>
          ) : (
            <div key={n} className="flex w-[41px] shrink-0 justify-center">{top[k]}</div>
          )
        )}
      </div>
      <div className="flex h-[854px] shrink-0">
        <LeftDock />
        <div className="w-[5px] shrink-0 bg-[#dcdcdc]" />
        <ToolColumn items={leftTools} className="w-[44px] shrink-0 border-b border-[#dcdcdc]" />
        <Canvas />
        <ToolColumn items={rightTools} className="w-[44px] shrink-0 border-b border-[#dcdcdc]" />
      </div>
      <div className="h-[40px] shrink-0" />
      <div className="flex h-[28px] shrink-0 border-t border-[#d2d2d2] pl-[584px]">
        {status.map(([cls, w, t]) => (
          <div key={t} className={"my-[1px] shrink-0 border-l border-[#d2d2d2] pl-[4px] " + cls}>
            <Fit w={w} className="text-[15px] leading-[27px]">{t}</Fit>
          </div>
        ))}
        <div className="my-[1px] border-l border-[#d2d2d2]" />
      </div>
      <Taskbar />
    </div>
  );
}
